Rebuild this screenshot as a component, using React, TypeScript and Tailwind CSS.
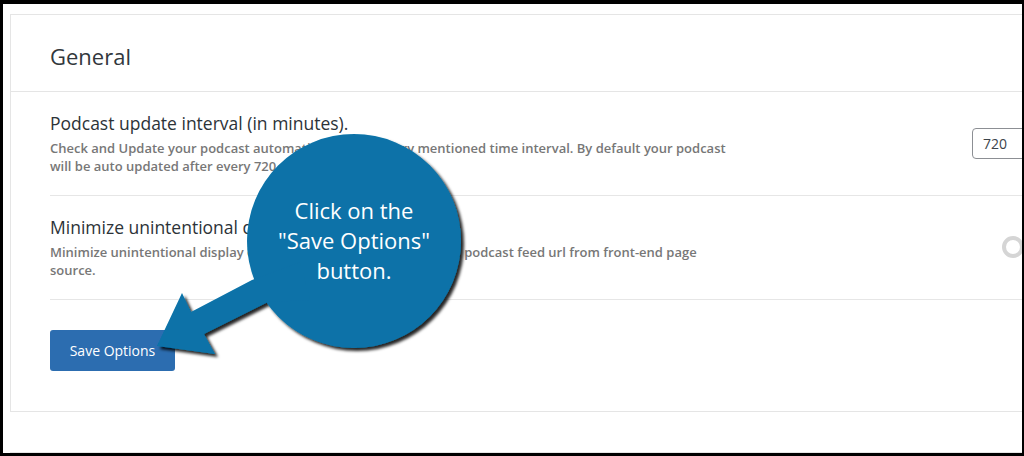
const font = { fontFamily: '"Open Sans", "Liberation Sans", sans-serif' };

type Row = {
  title: string;
  lines: string[];
  control: "input" | "toggle";
};

const rows: Row[] = [
  {
    title: "Podcast update interval (in minutes).",
    lines: [
      "Check and Update your podcast automatically, after every mentioned time interval. By default your podcast",
      "will be auto updated after every 720 minutes.",
    ],
    control: "input",
  },
  {
    title: "Minimize unintentional display of feed url",
    lines: [
      "Minimize unintentional display of your original third-party hosted podcast feed url from front-end page",
      "source.",
    ],
    control: "toggle",
  },
];

function Callout() {
  return (
    <>
      <svg
        className="pointer-events-none absolute inset-0"
        width={1024}
        height={456}
        viewBox="0 0 1024 456"
      >
        <defs>
          <filter id="drop" x="-20%" y="-20%" width="140%" height="140%">
            <feDropShadow dx="3" dy="3" stdDeviation="1.6" floodColor="#000" floodOpacity="0.85" />
          </filter>
        </defs>
        <g filter="url(#drop)" fill="#0872a8">
          <circle cx="354" cy="241" r="107" />
          <polygon points="157,346 182,293 191,312 252,280 300,262 310,300 268,302 204,334 215,354" />
        </g>
      </svg>
      <div
        className="pointer-events-none absolute left-[247px] top-[195px] w-[214px] text-center text-[22px] leading-[30px] text-white"
        style={font}
      >
        Click on the
        <br />
        "Save Options"
        <br />
        button.
      </div>
    </>
  );
}

export default function App() {
  return (
    <div className="relative h-[456px] w-[1024px] overflow-hidden bg-black pb-[3px] pl-[3px] pr-[2px] pt-[4px]" style={font}>
      <div className="h-full w-full overflow-hidden bg-white pl-[7px] pt-[10px]">
        <div className="w-[1100px] border border-[#e5e5e5]">
          <div className="border-b border-[#e5e5e5] pb-[20px] pl-[39px] pt-[26px]">
            <h1 className="text-[22px] leading-[30px] text-[#32373c]">General</h1>
          </div>

          <div className="pl-[39px]">
            {rows.map((row) => (
              <div key={row.title} className="flex items-center border-b border-[#e6e6e6] pb-[20px] pt-[19px]">
                <div className="w-[922px] shrink-0">
                  <h2 className="text-[17.5px] leading-[24px] text-[#2c3338]">{row.title}</h2>
                  <p className="mt-[4px] text-[13px] font-semibold leading-[18px] text-[#777777]">
                    {row.lines[0]}
                    <br />
                    {row.lines[1]}
                  </p>
                </div>
                {row.control === "input" ? (
                  <div className="flex h-[31px] w-[80px] items-center rounded-[4px] border border-[#8c8f94] px-[10px] text-[14px] text-[#3c434a]">
                    720
                  </div>
                ) : (
                  <div className="pl-[30px]">
                    <div className="h-[22px] w-[22px] rounded-full border-[4px] border-[#d5d5d5]" />
                  </div>
                )}
              </div>
            ))}

            <div className="pb-[40px] pt-[30px]">
              <button className="h-[41px] w-[125px] rounded-[3px] bg-[#2c6db0] text-[14px] text-white">
                Save Options
              </button>
            </div>
          </div>
        </div>

        <div className="mt-[40px] h-[10px] w-[1100px] border-t border-[#e5e5e5]" />
      </div>

      <Callout />
    </div>
  );
}
